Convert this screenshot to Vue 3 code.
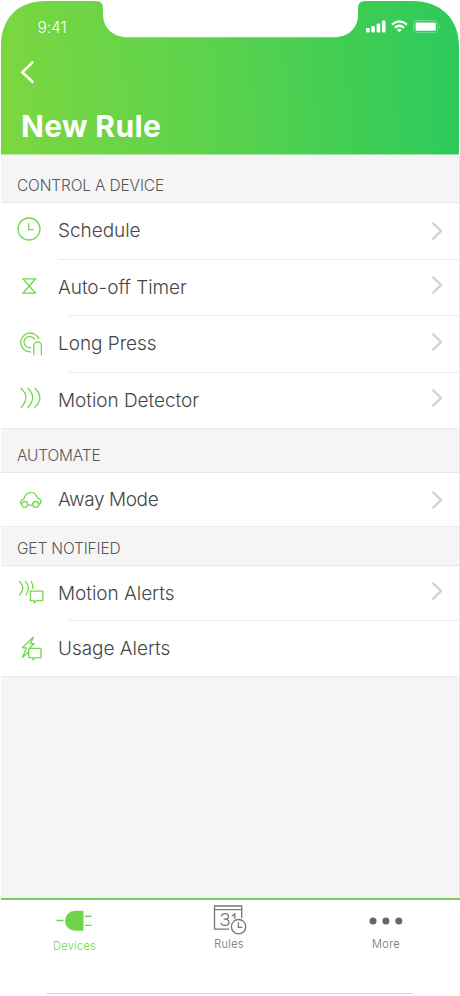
<script setup>
const sections = [
  {
    title: 'Control a device',
    size: 'tall',
    rows: [
      { label: 'Schedule', icon: 'clock', arrow: true, size: 'r57', line: 'near' },
      { label: 'Auto-off Timer', icon: 'timer', arrow: true, size: 'r57' },
      { label: 'Long Press', icon: 'press', arrow: true, size: 'r57' },
      { label: 'Motion Detector', icon: 'motion', arrow: true, size: 'r57', line: 'none' }
    ]
  },
  {
    title: 'Automate',
    size: 'mid',
    rows: [{ label: 'Away Mode', icon: 'car', arrow: true, size: 'r54', line: 'none' }]
  },
  {
    title: 'Get notified',
    size: 'short',
    rows: [
      { label: 'Motion Alerts', icon: 'motionAlert', arrow: true, size: 'r55' },
      { label: 'Usage Alerts', icon: 'usageAlert', arrow: false, size: 'r55', line: 'none' }
    ]
  }
]

const icons = {
  clock: 'M40 26a11 11 0 1 1-22 0a11 11 0 1 1 22 0zM28.7 20.3v6.4h4.8',
  timer: 'M22.2 18.8H36.3M22.2 33.2H36.3M23.2 19L35.3 33M35.3 19L23.2 33',
  press:
    'M31 35.8A9.4 9.4 0 1 1 38.9 23M31.2 31.4A5.6 5.6 0 1 1 34.8 23.8M33.8 39.3v-9.5a3.8 3.8 0 0 1 7.6 0v9.5',
  motion: 'M20.7 15Q31.2 24.5 20.7 34.7M27.5 15Q37.8 24.5 27.5 34.7M34.5 15Q45.2 24.5 34.5 34.7',
  car: 'M22 31.8c-2.4-1.5-1.6-5.2 1.7-5.7c1.6-4.6 4.2-6.8 7.8-6.7c3 0 4.6 2.3 5.9 5.7c3.9.5 4.9 4.9 1.4 6.6M27.6 32.2h5.3M27.6 31.4a2.9 2.9 0 1 1-5.8 0a2.9 2.9 0 1 1 5.8 0zM38.6 31.4a2.9 2.9 0 1 1-5.8 0a2.9 2.9 0 1 1 5.8 0z',
  motionAlert:
    'M19.3 15Q26.4 22 19.3 29.3M25.2 15Q31.4 22 25.6 29.3M31 15Q33.4 18.5 32.8 23M30.4 25.2h12.4v9.4h-6.2l-2.3 2.5v-2.5h-3.9z',
  usageAlert:
    'M33.7 15.7L22.4 26.8H26.6L22.4 36.4L28.4 31M33.7 15.7L30.2 22.7H34L29.6 27M28.8 27.3H41v9.3h-5.6L33 39v-2.4h-4.2z'
}
</script>

<template>
  <div class="phone">
    <header class="header">
      <div class="status">
        <span class="time">9:41</span>
        <svg class="indicators" width="76" height="14" viewBox="0 0 76 14">
          <g fill="#fff">
            <rect x="0" y="8" width="3.6" height="4.4" rx="1" />
            <rect x="5.3" y="6" width="3.6" height="6.4" rx="1" />
            <rect x="10.6" y="3.4" width="3.6" height="9" rx="1" />
            <rect x="15.9" y="0.4" width="3.6" height="12" rx="1" />
            <path d="M33.4 12.2L30.9 9.7Q33.4 7.7 35.9 9.7Z" />
            <rect x="49.6" y="2.4" width="20.2" height="8.4" rx="1.4" />
            <path d="M73.6 4.6q1.5 2-.1 4z" opacity="0.5" />
          </g>
          <g fill="none" stroke="#fff">
            <path d="M25.8 4.6Q33.4-2 41 4.6M28.8 7.8Q33.4 3.7 38 7.8" stroke-width="2.2" />
            <rect x="47.7" y="0.6" width="24" height="12" rx="3" opacity="0.3" stroke-width="1" />
          </g>
        </svg>
      </div>
      <svg class="back" width="16" height="24" viewBox="0 0 16 24">
        <path d="M12.6 2.4L2.3 12.2L12.6 22" fill="none" stroke="#fff" stroke-width="2.5" stroke-linecap="round" />
      </svg>
      <h1 class="title">New Rule</h1>
    </header>

    <main class="content">
      <section v-for="section in sections" :key="section.title">
        <h2 class="section-title" :class="section.size">{{ section.title }}</h2>
        <div v-for="row in section.rows" :key="row.label" class="row" :class="[row.size, row.line]">
          <svg class="icon" width="50" height="52" viewBox="0 0 50 52">
            <path :d="icons[row.icon]" />
          </svg>
          <span class="label">{{ row.label }}</span>
          <svg v-if="row.arrow" class="chevron" width="12" height="20" viewBox="0 0 12 20">
            <path d="M1.4 1.6L10 10L1.4 18.4" />
          </svg>
        </div>
      </section>
    </main>

    <nav class="tabs">
      <div class="tab active">
        <svg width="44" height="36" viewBox="0 0 44 36">
          <path d="M30.5 10.7v20H22a10 10 0 0 1 0-20z" fill="#70d44b" />
          <path d="M3.5 20.5h7M31.8 16.2h6.6M31.8 25.4h6.6" stroke="#70d44b" stroke-width="1.4" />
        </svg>
        <span>Devices</span>
      </div>
      <div class="tab">
        <svg width="36" height="36" viewBox="0 0 36 36" fill="none" stroke="#777" stroke-width="1.3">
          <path d="M18.2 29.2H3.5V6H30.7V18.2M3.5 9.7H30.7" />
          <path d="M10.3 16.3q.5-2.6 3.6-2.6c4.8 0 4.8 5.4 0 5.4h-1.2M13.9 19.1c5.4 0 5.4 6.4 0 6.4q-3.5 0-4-3M20.8 16.2l3-2.3v4.9" />
          <circle cx="27.6" cy="26.7" r="7.2" />
          <path d="M27.4 22.3v5h4" />
        </svg>
        <span>Rules</span>
      </div>
      <div class="tab more">
        <svg width="36" height="36" viewBox="0 0 36 36" fill="#676767">
          <circle cx="5" cy="21" r="3.5" />
          <circle cx="17.9" cy="21" r="3.5" />
          <circle cx="30.8" cy="21" r="3.5" />
        </svg>
        <span>More</span>
      </div>
    </nav>
    <div class="home-line"></div>
  </div>
</template>

<style>
body {
  margin: 0;
  background: #fff;
}
</style>

<style scoped>
.phone {
  box-sizing: border-box;
  width: 460px;
  height: 996px;
  display: flex;
  flex-direction: column;
  background: #fff;
  font-family: Inter, 'Liberation Sans', sans-serif;
  overflow: hidden;
}
.header {
  box-sizing: border-box;
  height: 154.5px;
  flex: none;
  display: flex;
  flex-direction: column;
  align-items: flex-start;
  padding: 17px 18px 0 20px;
  background: linear-gradient(86deg, #7bd740 2%, #5ad24d 48%, #42cd54 74%, #2dca5c 99%);
  clip-path: path('M1 154.5V46C1 18 18 1 46 1H96Q103 1 103 8V14C103 28 113 37.3 128 37.3H334C348 37.3 358 28 358 15V8Q358 1 365 1H412C440 1 459 18 459 46V154.5Z');
}
.status {
  width: 100%;
  height: 20px;
  display: flex;
  align-items: center;
  justify-content: space-between;
}
.time {
  padding: 1px 0 0 17.5px;
  color: #fff;
  font-size: 15.5px;
  font-weight: 350;
  line-height: 20px;
  letter-spacing: -0.1px;
}
.indicators {
  margin-top: -1px;
}
.back {
  margin-top: 23px;
}
.title {
  margin: 22px 0 0 1px;
  color: #fff;
  font-size: 30px;
  font-weight: 650;
  line-height: 40px;
  letter-spacing: 0.35px;
}
.content {
  height: 743.5px;
  flex: none;
  margin-left: 1px;
  background: #f5f5f5;
  border-right: 1px solid #efe2e0;
}
.section-title {
  box-sizing: border-box;
  display: flex;
  align-items: center;
  margin: 0;
  padding: 15px 16px 0;
  border-bottom: 1px solid #e6e6e6;
  background: #f5f5f5;
  color: #585858;
  font-size: 15.5px;
  font-weight: 300;
  letter-spacing: -0.16px;
  text-transform: uppercase;
}
.tall {
  height: 48.5px;
}
.mid {
  height: 43.5px;
  padding-top: 10px;
}
.short {
  height: 38.5px;
  padding-top: 6px;
}
.row {
  box-sizing: border-box;
  display: flex;
  align-items: flex-start;
  background: linear-gradient(#ebebeb, #ebebeb) 67px 100% / 100% 1px no-repeat #fff;
}
.near {
  background-position: 57px 100%;
}
.none {
  background-position: 0 100%;
}
.r57 {
  height: 56.5px;
}
.r55 {
  height: 55.5px;
}
.r54 {
  height: 54.5px;
}
.icon {
  flex: none;
  margin-left: -1px;
}
.icon path {
  fill: none;
  stroke: #73d850;
  stroke-width: 1.3;
  stroke-linejoin: round;
}
.label {
  flex: 1;
  padding: 16.2px 0 0 8px;
  color: #464646;
  font-size: 19px;
  font-weight: 300;
  line-height: 24px;
  letter-spacing: -0.04px;
}
.near .label {
  padding-top: 15.5px;
}
.r54 .label {
  padding-top: 15px;
  letter-spacing: -0.4px;
}
.chevron {
  margin: 15.5px 16.5px 0 0;
}
.near .chevron,
.r54 .chevron {
  margin-top: 17.5px;
}
.chevron path {
  fill: none;
  stroke: #d3d3d3;
  stroke-width: 2.4;
}
.tabs {
  box-sizing: border-box;
  height: 95px;
  flex: none;
  display: grid;
  grid-template-columns: 147px 162px 152px;
  margin-left: 1px;
  border-top: 2.5px solid #76cd58;
}
.tab {
  display: flex;
  flex-direction: column;
  align-items: center;
  color: #707070;
  font-size: 11px;
  font-weight: 350;
  line-height: 14px;
  letter-spacing: 0.3px;
}
.tab span {
  margin-top: 1px;
}
.tab.active {
  color: #70d44b;
}
.tab.active span {
  margin-top: 3px;
}
.home-line {
  width: 367px;
  height: 1px;
  margin-left: 46px;
  background: #f0cdd2;
}
</style>
